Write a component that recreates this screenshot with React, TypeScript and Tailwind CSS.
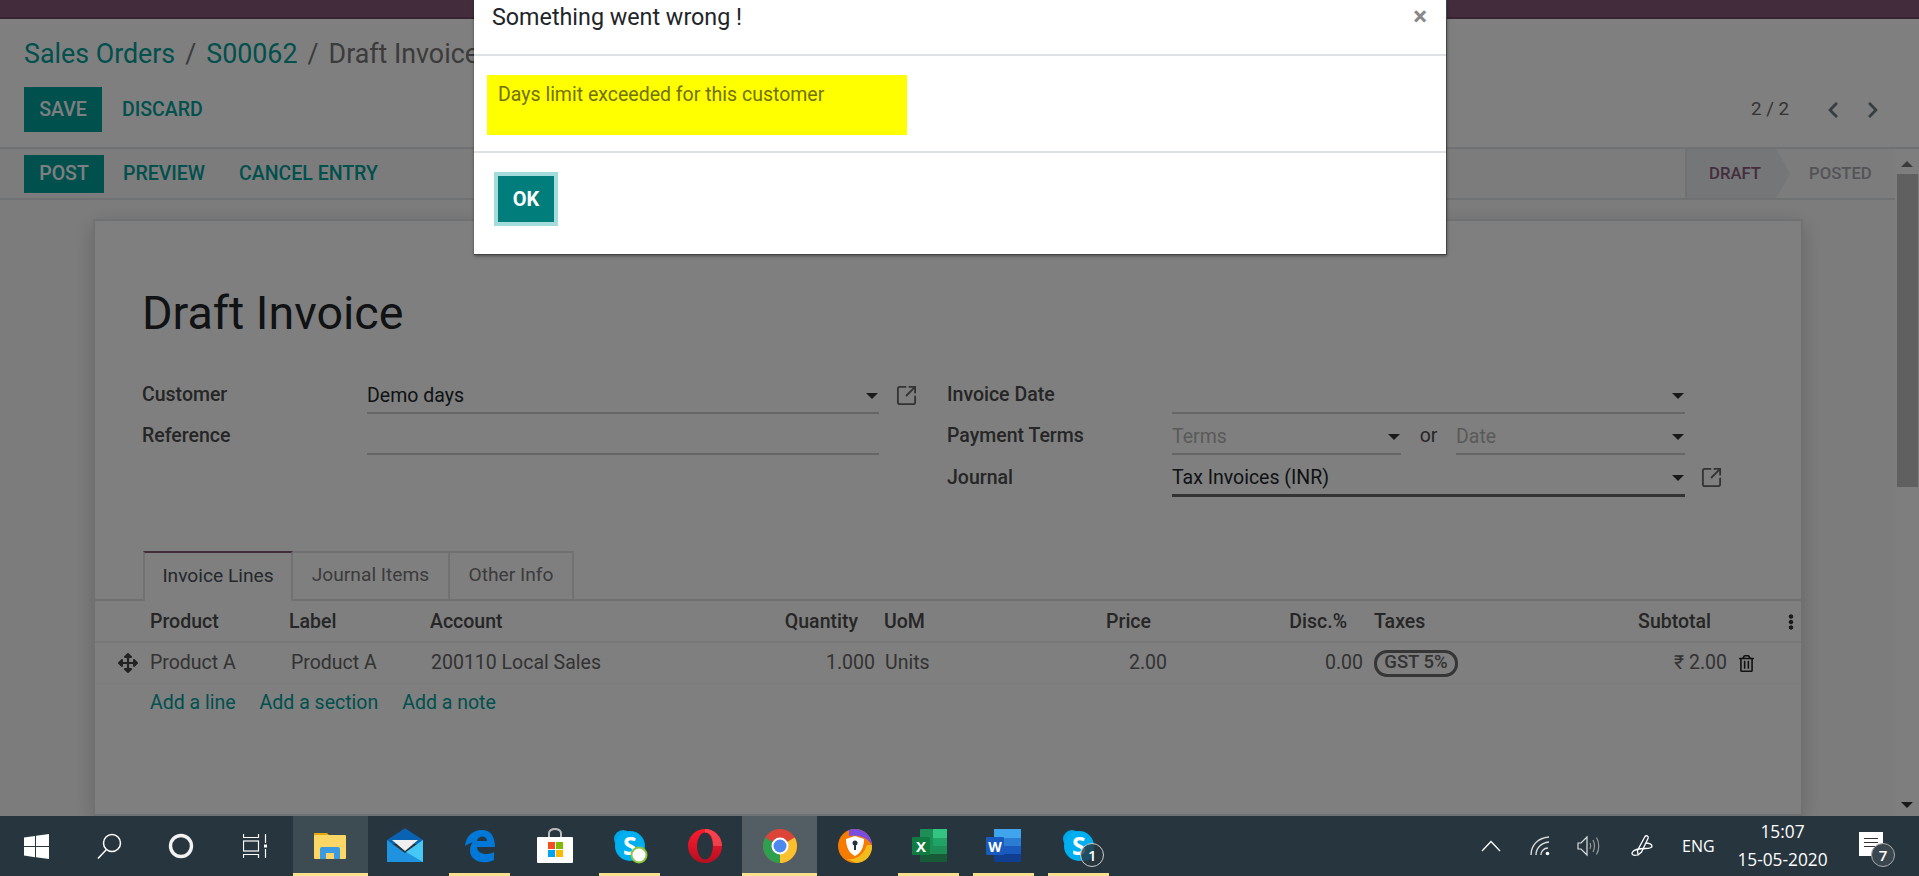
import React from 'react';
import { FaArrowsAlt, FaChevronLeft, FaChevronRight, FaEllipsisV, FaRegTrashAlt } from 'react-icons/fa';
import { SquareArrowOutUpRight } from 'lucide-react';

const TEAL = 'text-[#00a09d]';

function Caret() {
  return <span className="ml-auto mr-[1px] h-0 w-0 border-x-[6px] border-t-[6px] border-x-transparent border-t-[#333]" />;
}

function ExtLink() {
  return <SquareArrowOutUpRight size={23} strokeWidth={1.9} className="text-[#666]" />;
}

function Combo({ text, placeholder, wide, active }: { text?: string; placeholder?: boolean; wide?: string; active?: boolean }) {
  return (
    <div className={`flex h-full shrink-0 items-center pt-[6px] ${active ? 'border-b-[3px] border-[#666]' : 'border-b-2 border-[#ccc]'} ${wide ?? 'flex-1'}`}>
      <span className={`text-[19.5px] ${placeholder ? 'text-[#b5b5b5]' : 'text-[#212529]'}`}>{text}</span>
      <Caret />
    </div>
  );
}

function Label({ children }: { children: React.ReactNode }) {
  return <div className="w-[225px] shrink-0 pt-[3px] text-[19.5px] font-medium text-[#4c4c4c]">{children}</div>;
}

function FormRows() {
  return (
    <div className="ml-[47px] flex">
      <div className="w-[805px] shrink-0">
        <div className="flex h-[41px] items-center">
          <Label>Customer</Label>
          <Combo text="Demo days" wide="w-[512px]" />
          <div className="ml-[16px] pt-[3px]"><ExtLink /></div>
        </div>
        <div className="flex h-[41px] items-center">
          <Label>Reference</Label>
          <div className="h-full w-[512px] border-b-2 border-[#ccc]" />
        </div>
      </div>
      <div className="w-[800px] shrink-0">
        <div className="flex h-[41px] items-center">
          <Label>Invoice Date</Label>
          <Combo wide="w-[513px]" />
        </div>
        <div className="flex h-[41px] items-center">
          <Label>Payment Terms</Label>
          <div className="flex h-full w-[513px] shrink-0 items-center">
            <Combo text="Terms" placeholder wide="w-[229px]" />
            <span className="w-[55px] pt-[3px] text-center text-[19.5px] text-[#4c4c4c]">or</span>
            <Combo text="Date" placeholder wide="w-[229px]" />
          </div>
        </div>
        <div className="flex h-[42px] items-center">
          <Label>Journal</Label>
          <Combo text="Tax Invoices (INR)" wide="w-[513px]" active />
          <div className="ml-[15px] pt-[3px]"><ExtLink /></div>
        </div>
      </div>
    </div>
  );
}

function Tabs() {
  return (
    <div className="mt-[54px] flex h-[50px] items-stretch border-b-2 border-[#dee2e6] pl-[48px] text-[19.2px]">
      <div className="-mb-[2px] flex w-[150px] items-center justify-center border-x-2 border-t-2 border-[#dee2e6] border-t-[#875a7b] bg-white pb-[2px] text-[#495057]">Invoice Lines</div>
      <div className="flex w-[157px] items-center justify-center border-r-2 border-t-2 border-[#dee2e6] pb-[1px] text-[#777]">Journal Items</div>
      <div className="flex w-[124px] items-center justify-center border-r-2 border-t-2 border-[#dee2e6] pb-[1px] text-[#777]">Other Info</div>
    </div>
  );
}

const COLS = 'grid grid-cols-[55px_139px_141px_270px_175px_125px_167px_196px_237px_127px_75px] items-center';

function InvoiceTable() {
  return (
    <div className="text-[19.5px]">
      <div className={`${COLS} h-[42px] border-b-2 border-[#eee] pt-[1px] font-medium text-[#4c4c4c]`}>
        <span />
        <span>Product</span>
        <span>Label</span>
        <span>Account</span>
        <span className="pr-[17px] text-right">Quantity</span>
        <span className="pl-[9px]">UoM</span>
        <span className="pr-[16px] text-right">Price</span>
        <span className="pr-[16px] text-right">Disc.%</span>
        <span className="pl-[11px]">Taxes</span>
        <span className="pr-[16px] text-right">Subtotal</span>
        <FaEllipsisV size={16} className="ml-[56px] text-[#333]" />
      </div>
      <div className={`${COLS} h-[41px] border-b border-[#f7f7f7] text-[#666]`}>
        <FaArrowsAlt size={20} className="ml-[23px] text-[#444]" />
        <span>Product A</span>
        <span className="pl-[2px]">Product A</span>
        <span className="pl-[1px]">200110 Local Sales</span>
        <span className="text-right">1.000</span>
        <span className="pl-[10px]">Units</span>
        <span className="text-right">2.00</span>
        <span className="text-right">0.00</span>
        <span className="pl-[11px]">
          <span className="flex h-[27px] w-[84px] items-center justify-center rounded-[13px] border-[3px] border-[#6c6c6c] text-[18.5px] font-medium">GST 5%</span>
        </span>
        <span className="text-right">₹ 2.00</span>
        <FaRegTrashAlt size={17} className="ml-[11px] text-[#222]" />
      </div>
      <div className={`flex h-[38px] items-center gap-[24px] pl-[55px] ${TEAL}`}>
        <span>Add a line</span>
        <span>Add a section</span>
        <span>Add a note</span>
      </div>
    </div>
  );
}

function StatusBar() {
  return (
    <div className="flex h-[51px] shrink-0 items-stretch border-b-2 border-[#dee2e6] pl-[24px] text-[19.5px] font-medium">
      <div className="mt-[6px] flex h-[38px] w-[80px] items-center justify-center bg-[#00a09d] text-white">POST</div>
      <div className={`ml-[19px] flex items-center ${TEAL}`}>PREVIEW</div>
      <div className={`ml-[34px] flex items-center ${TEAL}`}>CANCEL ENTRY</div>
      <div className="ml-auto flex w-[210px] items-stretch text-[16.7px]">
        <div className="flex w-[105px] items-center border-l-2 border-[#dee2e6] bg-[#e9ecef] pl-[22px] text-[#875a7b] [clip-path:polygon(0_0,87%_0,100%_50%,87%_100%,0_100%)]">DRAFT</div>
        <div className="flex items-center pl-[19px] text-[#a8a8b0]">POSTED</div>
      </div>
    </div>
  );
}

function Scrollbar() {
  return (
    <div className="flex w-[24px] shrink-0 flex-col items-center bg-[#fcfcfc]">
      <span className="mt-[12px] h-0 w-0 border-x-[6px] border-b-[6px] border-x-transparent border-b-[#777]" />
      <div className="mt-[7px] ml-[1px] h-[313px] w-[21px] bg-[#c1c1c1]" />
      <span className="mt-auto mb-[8px] h-0 w-0 border-x-[6px] border-t-[6px] border-x-transparent border-t-[#333]" />
    </div>
  );
}

function Page() {
  return (
    <>
      <div className="h-[19px] shrink-0 border-b-2 border-[#6d4863] bg-[#875a7b]" />
      <div className="h-[130px] shrink-0 border-b-2 border-[#dee2e6] bg-white pl-[24px] pr-[37px]">
        <div className="flex h-[68px] items-center pt-[2px] text-[26.8px] text-[#777]">
          <span className={TEAL}>Sales Orders</span>
          <span className="mx-[10px]">/</span>
          <span className={TEAL}>S00062</span>
          <span className="mx-[10px]">/</span>
          <span>Draft Invoice</span>
        </div>
        <div className="flex h-[45px] items-center text-[19.5px] font-medium">
          <div className="flex h-full w-[78px] items-center justify-center bg-[#00a09d] text-white">SAVE</div>
          <div className={`ml-[20px] ${TEAL}`}>DISCARD</div>
          <div className="ml-auto text-[18.7px] font-normal text-[#666]">2 / 2</div>
          <FaChevronLeft size={18} className="ml-[35px] text-[#6c7a82]" />
          <FaChevronRight size={18} className="ml-[22px] text-[#6c7a82]" />
        </div>
      </div>
      <div className="flex min-h-0 flex-1">
        <div className="flex min-w-0 flex-1 flex-col overflow-hidden bg-[#f9f9f9]">
          <StatusBar />
          <div className="ml-[93px] mt-[19px] w-[1710px] flex-1 border-2 border-[#dee2e6] bg-white shadow-[0_5px_20px_-1px_rgba(0,0,0,0.2)]">
            <h1 className="mb-[33px] ml-[47px] mt-[65px] h-[54px] text-[46.600px] leading-[54px] font-normal text-[#212529]">Draft Invoice</h1>
            <FormRows />
            <Tabs />
            <InvoiceTable />
          </div>
        </div>
        <Scrollbar />
      </div>
    </>
  );
}

function Modal() {
  return (
    <div className="absolute left-[474px] top-0 flex h-[255px] w-[973px] flex-col border-b border-r border-[#444] bg-white shadow-[0_1px_3px_rgba(0,0,0,0.4)]">
      <div className="flex h-[56px] shrink-0 items-start justify-between border-b-2 border-[#dee2e6] pl-[18px] pr-[19px]">
        <span className="mt-[3px] text-[23.3px] leading-[28px] text-[#212529]">Something went wrong !</span>
        <span className="mt-[2px] text-[26px] leading-[28px] font-bold text-[#888]">×</span>
      </div>
      <div className="h-[97px] shrink-0 border-b-2 border-[#dee2e6] pl-[13px] pt-[19px]">
        <div className="h-[60px] w-[420px] bg-[#ffff00] pl-[11px] pt-[8px] text-[19.5px] leading-[24px] text-[#717100]">Days limit exceeded for this customer</div>
      </div>
      <div className="pl-[20px] pt-[19px]">
        <div className="flex h-[54px] w-[64px] items-center justify-center border-[4px] border-[#a3dcdb] bg-[#017e7c] text-[20px] font-bold text-white">OK</div>
      </div>
    </div>
  );
}

function Ico({ children }: { children: React.ReactNode }) {
  return <svg width="36" height="36" viewBox="0 0 36 36">{children}</svg>;
}

const SkypeShape = (
  <>
    <circle cx="11" cy="11" r="9" fill="#00a6e8" />
    <circle cx="24" cy="24" r="9" fill="#00a6e8" />
    <circle cx="18" cy="18" r="15" fill="#00aff0" />
    <text x="18" y="27" textAnchor="middle" fontSize="25" fontWeight="700" fontFamily="Open Sans" fill="#fff">S</text>
  </>
);

const Folder = (
  <Ico>
    <path d="M2 5h13l3 3h-16z" fill="#e2a90f" />
    <rect x="2" y="7" width="32" height="24" rx="1" fill="#fdd766" />
    <path d="M8 31v-10a2 2 0 0 1 2-2h16a2 2 0 0 1 2 2v10h-6v-6h-8v6z" fill="#3c9be0" />
    <rect x="14" y="25" width="8" height="6" fill="#fbd468" />
  </Ico>
);
const Mail = (
  <Ico>
    <path d="M0 12L16 1.500a3 3 0 0 1 4 0L36 12v4H0z" fill="#0a62b3" />
    <path d="M5 12h26l-13 11z" fill="#efefef" />
    <path d="M0 12l18 13 18-13v22H0z" fill="#1f93e0" />
    <path d="M36 12v22L19 24z" fill="#45c8f5" />
  </Ico>
);
const Edge = (
  <Ico>
    <path
      fillRule="evenodd"
      d="M3 18C4 8 11 2 20 2c9 0 13 7 13 17H15c0 7 10 9 17 5v8c-10 5-24 2-24-10 0-3 1-6 3-8-3 1-6 3-8 4zM15 13h10c0-6-9-6-10 0z"
      fill="#0078d7"
    />
  </Ico>
);
const Store = (
  <Ico>
    <path d="M12 10V5a6 4 0 0 1 12 0v5" fill="none" stroke="#bbb" strokeWidth="2" />
    <rect x="0" y="9" width="36" height="26" rx="1" fill="#fff" />
    <rect x="11" y="14" width="7" height="7" fill="#f25022" />
    <rect x="19" y="14" width="7" height="7" fill="#7fba00" />
    <rect x="11" y="22" width="7" height="7" fill="#00a4ef" />
    <rect x="19" y="22" width="7" height="7" fill="#ffb900" />
  </Ico>
);
const Skype = (
  <Ico>
    {SkypeShape}
    <circle cx="27" cy="27" r="7.500" fill="#fff" stroke="#8cc63f" strokeWidth="2" />
  </Ico>
);
const Opera = (
  <Ico>
    <defs>
      <linearGradient id="op" x1="0" y1="0" x2="0" y2="1">
        <stop offset="0" stopColor="#ff1b2d" />
        <stop offset="1" stopColor="#b70f20" />
      </linearGradient>
    </defs>
    <circle cx="18" cy="18" r="17" fill="url(#op)" />
    <ellipse cx="18" cy="18" rx="8" ry="13.500" fill="#27363e" />
    <path d="M18 4.500c7 0 8 7 8 13.500h9c0-9-7-17-17-17z" fill="#ff6a6f" opacity="0.5" />
  </Ico>
);
const Chrome = (
  <Ico>
    <circle cx="18" cy="18" r="17" fill="#db4437" />
    <path d="M18 18L32.700 9.500A17 17 0 0 1 18 35z" fill="#fbc02d" />
    <path d="M18 18L18 35A17 17 0 0 1 3.300 9.500z" fill="#2e9e4f" />
    <circle cx="18" cy="18" r="8.500" fill="#fff" />
    <circle cx="18" cy="18" r="6.500" fill="#4d88ee" />
  </Ico>
);
const Avast = (
  <Ico>
    <circle cx="18" cy="18" r="17" fill="#f57c00" />
    <path d="M12 2a17 17 0 0 1 23 15C31 10 22 6 12 8z" fill="#7a4ce0" />
    <path d="M35 17c1 9-6 18-16 18l-9-4c9 1 16-3 20-14z" fill="#f2bc1c" />
    <path d="M9 11l9-3 9 3c0 8-3 14-9 17-6-3-9-9-9-17z" fill="#fff" />
    <circle cx="18" cy="15" r="2.500" fill="#234" />
    <rect x="17" y="15" width="2" height="7" fill="#234" />
  </Ico>
);
const Excel = (
  <Ico>
    <rect x="8" y="1" width="27" height="33" rx="1" fill="#1d8f56" />
    <rect x="21" y="1" width="14" height="9" fill="#33c481" />
    <rect x="21" y="10" width="14" height="8" fill="#21a366" />
    <rect x="8" y="26" width="27" height="8" fill="#185c37" />
    <rect x="0" y="9" width="18" height="18" rx="1" fill="#107c41" />
    <text x="9" y="23.500" textAnchor="middle" fontSize="15" fontWeight="700" fontFamily="Open Sans" fill="#fff">X</text>
  </Ico>
);
const Word = (
  <Ico>
    <rect x="8" y="1" width="27" height="33" rx="1" fill="#2b7cd3" />
    <rect x="8" y="1" width="27" height="9" fill="#41a5ee" />
    <rect x="8" y="18" width="27" height="8" fill="#185abd" />
    <rect x="8" y="26" width="27" height="8" fill="#103f91" />
    <rect x="0" y="9" width="18" height="18" rx="1" fill="#185abd" />
    <text x="9" y="23.500" textAnchor="middle" fontSize="14" fontWeight="700" fontFamily="Open Sans" fill="#fff">W</text>
  </Ico>
);
const SkypeBadge = (
  <div className="relative">
    <Ico>{SkypeShape}</Ico>
    <span className="absolute -right-[7px] top-[15px] flex h-[24px] w-[24px] items-center justify-center rounded-full border border-[#ccc] bg-[#27363e]/80 text-[15px] font-semibold text-white">1</span>
  </div>
);

const PINNED: { icon: React.ReactNode; bar?: boolean; bg?: string }[] = [
  { icon: Folder, bar: true, bg: 'bg-[#3d4b52]' },
  { icon: Mail },
  { icon: Edge, bar: true },
  { icon: Store },
  { icon: Skype, bar: true },
  { icon: Opera },
  { icon: Chrome, bar: true, bg: 'bg-[#525e64]' },
  { icon: Avast },
  { icon: Excel, bar: true },
  { icon: Word, bar: true },
  { icon: SkypeBadge, bar: true },
];

function Taskbar() {
  return (
    <div className="flex h-[60px] shrink-0 items-stretch bg-[#27363e] font-['Open_Sans',sans-serif] text-white">
      <div className="flex w-[73px] items-center justify-center">
        <svg width="25" height="25" viewBox="0 0 25 25" fill="#fff">
          <path d="M0 3.500l11-1.600V12H0zM12 1.700L25 0v12H12zM0 13h11v10.200L0 21.600zM12 13h13v12l-13-1.800z" />
        </svg>
      </div>
      <div className="flex w-[72px] items-center justify-center">
        <svg width="25" height="26" viewBox="0 0 25 26" fill="none" stroke="#fff" strokeWidth="1.5">
          <circle cx="15" cy="10" r="8.500" />
          <path d="M9.500 16.500L1 25.500" />
        </svg>
      </div>
      <div className="flex w-[72px] items-center justify-center">
        <svg width="26" height="26" viewBox="0 0 26 26" fill="none" stroke="#f2f2f2" strokeWidth="3.400">
          <circle cx="13" cy="13" r="10.500" />
        </svg>
      </div>
      <div className="flex w-[76px] items-center justify-center">
        <svg width="24" height="24" viewBox="0 0 24 24" fill="none" stroke="#fff" strokeWidth="1.200">
          <path d="M0.500 0v3.500h15V0M0.500 24v-3.500h15V24" />
          <rect x="0.500" y="7" width="15" height="10" />
          <path d="M22.500 0v9M22.500 15v9" />
          <rect x="21" y="10.500" width="3" height="3" fill="#fff" stroke="none" />
        </svg>
      </div>
      {PINNED.map((p, i) => (
        <div key={i} className={`relative flex w-[74.9px] items-center justify-center ${p.bg ?? ''}`}>
          {p.icon}
          {p.bar && <span className={`absolute bottom-0 h-[3px] bg-[#fbe08f] ${p.bg ? 'inset-x-0' : 'left-[6px] w-[61px]'}`} />}
        </div>
      ))}
      <div className="ml-auto flex items-center pr-[1px]">
        <svg width="20" height="12" viewBox="0 0 20 12" fill="none" stroke="#fff" strokeWidth="1.300"><path d="M1 11L10 1.500 19 11" /></svg>
        <svg className="ml-[29px]" width="20" height="20" viewBox="0 0 20 20" fill="none" stroke="#ddd" strokeWidth="1.400">
          <path d="M1 19C1 9 8 2 19 1M6 19C6 12 11 7 19 6M11 19c0-4 3-7 7-7" />
          <circle cx="17.500" cy="17.500" r="1.800" fill="#fff" stroke="none" />
        </svg>
        <svg className="ml-[27px]" width="23" height="22" viewBox="0 0 23 22" fill="none" stroke="#ddd" strokeWidth="1.200">
          <path d="M1 8h3l6-6v18l-6-6H1z" />
          <path d="M13 8c1 2 1 4 0 6M16 5c2 4 2 8 0 12M19.500 2.500c3 5 3 12 0 17" stroke="#999" />
        </svg>
        <svg className="ml-[31px]" width="22" height="24" viewBox="0 0 22 24" fill="none" stroke="#fff" strokeWidth="1.300">
          <path d="M14 2.500a1.800 1.800 0 0 1 3.200 1.500L10.500 18 7 21l-.5-4.500z" />
          <path d="M15 9c3 0 6 1.500 6 3s-3 2.500-7 2.500-11 1-12.500 3.500 1 4 4.500 3" />
        </svg>
        <span className="ml-[29px] w-[34px] text-[16px]">ENG</span>
        <div className="ml-[20px] flex w-[93px] flex-col items-center text-[17.3px] leading-[28px]">
          <span>15:07</span>
          <span className="whitespace-nowrap">15-05-2020</span>
        </div>
        <div className="relative ml-[30px] mr-[35px] mb-[4px] h-[24px] w-[24px] bg-white">
          <div className="mx-[5px] mt-[6px] flex flex-col gap-[3px]">
            <span className="h-[1px] bg-[#333]" />
            <span className="h-[1px] bg-[#333]" />
            <span className="h-[1px] bg-[#333]" />
          </div>
          <span className="absolute -right-[12px] top-[11px] flex h-[24px] w-[24px] items-center justify-center rounded-full border border-[#aaa] bg-[#3a474e] text-[15px] font-semibold">7</span>
        </div>
      </div>
    </div>
  );
}

export default function App() {
  return (
    <div className="flex h-[876px] w-[1919px] flex-col overflow-hidden font-[Roboto,sans-serif]">
      <div className="relative flex h-[816px] shrink-0 flex-col overflow-hidden">
        <Page />
        <div className="absolute inset-0 bg-black/50" />
        <Modal />
      </div>
      <Taskbar />
    </div>
  );
}
